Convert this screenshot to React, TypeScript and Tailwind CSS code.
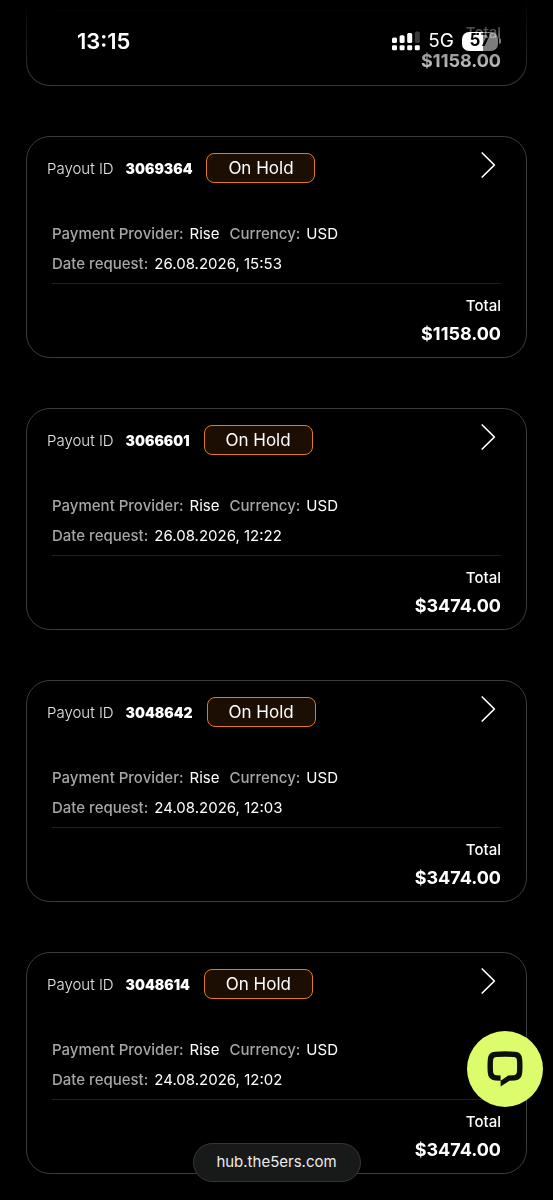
// Payout history: list of payout cards under the phone's status bar
type Payout = {
  id: string;
  status: string;
  provider: string;
  currency: string;
  date: string;
  total: string;
};

const payouts: Payout[] = [
  { id: '3069364', status: 'On Hold', provider: 'Rise', currency: 'USD', date: '26.08.2026, 15:53', total: '$1158.00' },
  { id: '3066601', status: 'On Hold', provider: 'Rise', currency: 'USD', date: '26.08.2026, 12:22', total: '$3474.00' },
  { id: '3048642', status: 'On Hold', provider: 'Rise', currency: 'USD', date: '24.08.2026, 12:03', total: '$3474.00' },
  { id: '3048614', status: 'On Hold', provider: 'Rise', currency: 'USD', date: '24.08.2026, 12:02', total: '$3474.00' },
];

function SignalIcon() {
  return (
    <svg width="28" height="20" viewBox="0 0 28 20" fill="white" aria-hidden="true">
      <rect x="0" y="6.5" width="5" height="5.5" rx="1.5" />
      <rect x="7.6" y="4.3" width="5" height="7.7" rx="1.5" />
      <rect x="15.2" y="2" width="5" height="10" rx="1.5" />
      <rect x="22.8" y="0.5" width="5" height="11.5" rx="1.5" fill="#3a3a3a" />
      <rect x="0" y="14.2" width="5" height="5" rx="1.3" />
      <rect x="7.6" y="14.2" width="5" height="5" rx="1.3" />
      <rect x="15.2" y="14.2" width="5" height="5" rx="1.3" />
      <rect x="22.8" y="14.2" width="5" height="5" rx="1.3" />
    </svg>
  );
}

function StatusBar() {
  return (
    <header className="fixed inset-x-0 top-0 flex h-[82px] items-center justify-between pl-[77px] pr-[52px] text-white">
      <span className="text-[22px] font-semibold">13:15</span>
      <div className="flex items-center">
        <SignalIcon />
        <span className="ml-2 text-[19px]">5G</span>
        <div className="ml-2 flex items-center">
          <span className="flex h-[19px] w-9 items-center justify-center rounded-[7px] bg-linear-to-r from-white from-57% to-[#7c7c7c] to-57% text-[17px] font-bold text-black">
            57
          </span>
          <span className="ml-px h-1.5 w-0.5 rounded-r-full bg-[#7c7c7c]" />
        </div>
      </div>
    </header>
  );
}

function Field({ label, value }: { label: string; value: string }) {
  return (
    <p className="flex gap-1.5">
      <span className="font-medium text-[#a6a6a6]">{label}</span>
      <span>{value}</span>
    </p>
  );
}

function PayoutTotal({ total }: { total: string }) {
  return (
    <div className="mx-[25px] border-t border-[#1f1f1f] pt-[10px] text-right text-white">
      <p className="text-[15px] leading-6 font-medium">Total</p>
      <p className="text-lg leading-8 font-bold">{total}</p>
    </div>
  );
}

function PayoutCard({ payout }: { payout: Payout }) {
  return (
    <article className="rounded-3xl border border-[#3c3c3f] pt-4 pb-[7px]">
      <div className="flex items-center px-5">
        <span className="pt-0.5 text-[15px] font-light text-[#e4e4e4]">Payout ID</span>
        <span className="ml-3 pt-0.5 text-sm font-black text-white">{payout.id}</span>
        <span className="ml-3.5 flex h-[30px] w-[109px] items-center justify-center rounded-lg border border-[#e07a1c] bg-[#1c0e03] pt-0.5 text-[17px] text-white">
          {payout.status}
        </span>
        <button type="button" aria-label="Open payout" className="mr-2 ml-auto self-start">
          <svg
            className="overflow-visible"
            width="20"
            height="24"
            viewBox="0 0 20 24"
            fill="none"
            stroke="white"
            strokeWidth="1.7"
            strokeLinecap="round"
            strokeLinejoin="round"
          >
            <path d="M4.2 0 L16.4 12 L4.2 24" />
          </svg>
        </button>
      </div>

      <div className="mx-[25px] mt-9 pb-1 text-[15px] leading-[30px] text-white">
        <div className="flex gap-[10px]">
          <Field label="Payment Provider:" value={payout.provider} />
          <Field label="Currency:" value={payout.currency} />
        </div>
        <Field label="Date request:" value={payout.date} />
      </div>

      <PayoutTotal total={payout.total} />
    </article>
  );
}

export default function App() {
  return (
    <div className="min-h-screen bg-black font-['Inter',sans-serif]">
      <StatusBar />

      {/* the list fades out where it runs under the status bar */}
      <main className="relative flex flex-col gap-[50px] mask-t-from-[calc(100%-90px)] mask-t-to-100% px-[26px] pb-[26px]">
        <article className="rounded-b-3xl border border-t-0 border-[#3c3c3f] pt-[10px] pb-2">
          <PayoutTotal total="$1158.00" />
        </article>
        {payouts.map((payout) => (
          <PayoutCard key={payout.id} payout={payout} />
        ))}
      </main>

      {/* chat launcher */}
      <button
        type="button"
        aria-label="Open chat"
        className="fixed right-[10px] bottom-[93px] flex size-[76px] items-center justify-center rounded-full bg-[#dcfc6c]"
      >
        <svg width="36" height="36" viewBox="0 0 36 36" aria-hidden="true">
          <path
            fill="#0d0f0a"
            fillRule="evenodd"
            d="M8 0.8 Q18 -0.2 28 0.8 Q34.6 1.2 35.2 8 Q35.8 15 35.2 22 Q34.6 29 28 29.4 L22.5 29.8 L13.6 35.6 V29.7 L8 29.4 Q1.4 29 0.8 22 Q0.2 15 0.8 8 Q1.4 1.2 8 0.8 Z M9.4 6 Q6.4 6.2 6.1 9 Q5.7 15 6.1 21 Q6.4 24 9.4 24.2 L13.6 24.4 V29.7 L21.2 24.4 L26.6 24.2 Q29.6 24 29.9 21 Q30.3 15 29.9 9 Q29.6 6.2 26.6 6 Q18 5.4 9.4 6 Z"
          />
        </svg>
      </button>

      {/* collapsed address bar */}
      <footer className="pointer-events-none fixed inset-x-0 bottom-[18px] flex justify-center">
        <button
          type="button"
          className="pointer-events-auto h-[39px] w-[168px] rounded-full border border-[#363636] bg-[#181919] text-[15px] text-[#ececec]"
        >
          hub.the5ers.com
        </button>
      </footer>
    </div>
  );
}
